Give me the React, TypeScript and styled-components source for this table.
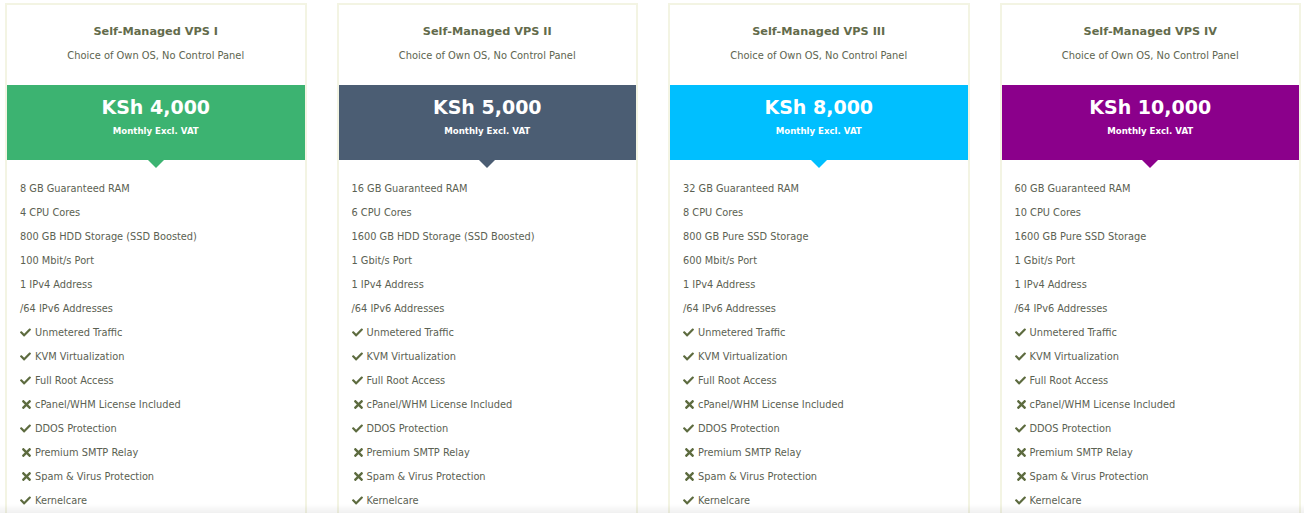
import React from 'react';
import styled, { createGlobalStyle } from 'styled-components';
import { FaCheck, FaTimes } from 'react-icons/fa';

const GlobalStyle = createGlobalStyle`
  html, body {
    margin: 0;
    padding: 0;
    background: #fff;
    font-family: "DejaVu Sans", Verdana, sans-serif;
  }
`

const Page = styled.div`
  display: grid;
  grid-template-columns: repeat(4, 1fr);
  column-gap: 30px;
  padding: 3px 3px 0 5px;
`

const Card = styled.div`
  border: 2px solid #f3f4e3;
  background: #fff;
  padding-bottom: 40px;
`

const Header = styled.div`
  height: 80px;
  padding-top: 15px;
  box-sizing: border-box;
  text-align: center;
`

const Title = styled.div`
  font-weight: bold;
  font-size: 11.3px;
  line-height: 24px;
  color: #636b4b;
`

const Subtitle = styled.div`
  font-size: 9.9px;
  line-height: 24px;
  color: #5e6550;
`

const Band = styled.div<{ $color: string }>`
  position: relative;
  height: 75px;
  padding-top: 10px;
  box-sizing: border-box;
  background: ${p => p.$color};
  color: #fff;
  text-align: center;

  &::after {
    content: '';
    position: absolute;
    left: 50%;
    bottom: -8px;
    margin-left: -8px;
    border-left: 8px solid transparent;
    border-right: 8px solid transparent;
    border-top: 8px solid ${p => p.$color};
  }
`

const Price = styled.div`
  font-weight: bold;
  font-size: 19px;
  line-height: 24px;
`

const Period = styled.div`
  margin-top: 3px;
  font-weight: bold;
  font-size: 8.6px;
  line-height: 18px;
`

const Features = styled.ul`
  list-style: none;
  margin: 0;
  padding: 16px 0 0 13px;
`

const Feature = styled.li`
  display: flex;
  align-items: center;
  height: 24px;
  font-size: 9.8px;
  color: #5b6152;
`

const Mark = styled.span<{ $yes: boolean }>`
  display: inline-flex;
  align-items: center;
  margin-right: ${p => (p.$yes ? '4px' : '2px')};
  color: #5d6b3f;
`

interface Plan {
  name: string;
  price: string;
  color: string;
  specs: string[];
}

const plans: Plan[] = [
  {
    name: 'Self-Managed VPS I',
    price: 'KSh 4,000',
    color: '#3cb371',
    specs: ['8 GB Guaranteed RAM', '4 CPU Cores', '800 GB HDD Storage (SSD Boosted)', '100 Mbit/s Port'],
  },
  {
    name: 'Self-Managed VPS II',
    price: 'KSh 5,000',
    color: '#4b5d73',
    specs: ['16 GB Guaranteed RAM', '6 CPU Cores', '1600 GB HDD Storage (SSD Boosted)', '1 Gbit/s Port'],
  },
  {
    name: 'Self-Managed VPS III',
    price: 'KSh 8,000',
    color: '#00bfff',
    specs: ['32 GB Guaranteed RAM', '8 CPU Cores', '800 GB Pure SSD Storage', '600 Mbit/s Port'],
  },
  {
    name: 'Self-Managed VPS IV',
    price: 'KSh 10,000',
    color: '#8b008b',
    specs: ['60 GB Guaranteed RAM', '10 CPU Cores', '1600 GB Pure SSD Storage', '1 Gbit/s Port'],
  },
];

const common = ['1 IPv4 Address', '/64 IPv6 Addresses'];

const extras: [string, boolean][] = [
  ['Unmetered Traffic', true],
  ['KVM Virtualization', true],
  ['Full Root Access', true],
  ['cPanel/WHM License Included', false],
  ['DDOS Protection', true],
  ['Premium SMTP Relay', false],
  ['Spam & Virus Protection', false],
  ['Kernelcare', true],
];

const BottomShade = styled.div`
  position: fixed;
  left: 0;
  right: 0;
  bottom: 0;
  height: 9px;
  background: linear-gradient(to bottom, rgba(0, 0, 0, 0), rgba(0, 0, 0, 0.06));
  pointer-events: none;
`

const App: React.FC = () => {
  return (
    <>
      <GlobalStyle />
      <Page>
        {plans.map((plan, i) => (
          <Card key={i}>
            <Header>
              <Title>{plan.name}</Title>
              <Subtitle>Choice of Own OS, No Control Panel</Subtitle>
            </Header>
            <Band $color={plan.color}>
              <Price>{plan.price}</Price>
              <Period>Monthly Excl. VAT</Period>
            </Band>
            <Features>
              {[...plan.specs, ...common].map((s, j) => (
                <Feature key={j}>{s}</Feature>
              ))}
              {extras.map(([label, yes], j) => (
                <Feature key={'x' + j}>
                  <Mark $yes={yes}>{yes ? <FaCheck size={11} /> : <FaTimes size={13} />}</Mark>
                  {label}
                </Feature>
              ))}
            </Features>
          </Card>
        ))}
      </Page>
      <BottomShade />
    </>
  );
};

export default App;
